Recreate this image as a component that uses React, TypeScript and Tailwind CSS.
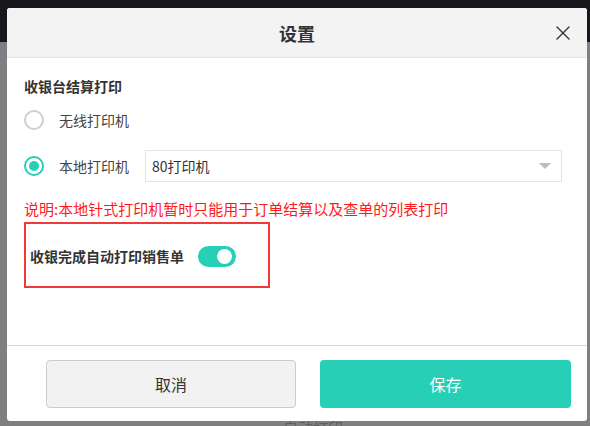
import { X } from 'lucide-react';

export default function App() {
  return (
    <div
      className="relative w-[590px] h-[426px] overflow-hidden bg-[#7f7f7f]"
      style={{ fontFamily: '"Noto Sans CJK SC", "Noto Sans", sans-serif' }}
    >
      {/* page behind the overlay */}
      <div className="h-[42px] bg-[#17181c]" />
      <div className="h-[16px] bg-[#7c8086]" />
      <div className="absolute left-[283px] top-[418px] text-[15px] leading-[20px] text-[#5f5f5f]">自动打印</div>

      {/* dialog */}
      <div className="absolute left-[7px] top-[8px] w-[580px] h-[413px] bg-white rounded-[3px] flex flex-col overflow-hidden">
        {/* header */}
        <div className="h-[50px] bg-[#f3f3f3] border-b border-[#e4e4e4] flex items-center justify-center relative">
          <span className="text-[18px] font-bold text-[#333] leading-none">设置</span>
          <button className="absolute right-[12px] top-[13px] text-[#333]">
            <X className="w-[24px] h-[24px]" strokeWidth={1.4} />
          </button>
        </div>

        {/* body */}
        <div className="flex-1 pl-[17px] pr-[25px] pt-[18px]">
          <div className="text-[14px] font-bold text-[#333] leading-[20px]">收银台结算打印</div>

          <div className="mt-[8px] h-[32px] flex items-center">
            <span className="w-[20px] h-[20px] rounded-full border-2 border-[#cfcfcf] bg-white" />
            <span className="ml-[15px] text-[14px] text-[#444]">无线打印机</span>
          </div>

          <div className="mt-[14px] h-[32px] flex items-center">
            <span className="w-[20px] h-[20px] rounded-full border-2 border-[#26cfb5] flex items-center justify-center">
              <span className="w-[10px] h-[10px] rounded-full bg-[#26cfb5]" />
            </span>
            <span className="ml-[15px] text-[14px] text-[#444] w-[70px]">本地打印机</span>
            <div className="ml-[16px] flex-1 h-[32px] border border-[#e4e4e4] flex items-center justify-between pl-[6px] pr-[10px]">
              <span className="text-[14px] text-[#333]">80打印机</span>
              <span className="w-0 h-0 border-l-[6px] border-r-[6px] border-t-[6px] border-l-transparent border-r-transparent border-t-[#bdbdbd]" />
            </div>
          </div>

          <div className="mt-[17px] text-[15px] text-[#ff1a1a] leading-[20px]">
            说明:本地针式打印机暂时只能用于订单结算以及查单的列表打印
          </div>

          <div className="mt-[3px] w-[246px] h-[66px] border-2 border-[#f03a3a] flex items-center pl-[4px] pt-[3px]">
            <span className="text-[14px] font-bold text-[#333]">收银完成自动打印销售单</span>
            <span className="ml-[14px] w-[38px] h-[21px] rounded-full bg-[#26cfb5] flex items-center justify-end pr-[4px]">
              <span className="w-[15px] h-[15px] rounded-full bg-white" />
            </span>
          </div>
        </div>

        {/* footer */}
        <div className="h-[76px] border-t border-[#d6d9d9] flex pl-[39px] pr-[16px] pt-[14px] gap-[24px]">
          <button className="w-[250px] h-[48px] rounded-[4px] border border-[#cccccc] bg-[#f2f2f2] text-[16px] text-[#333]">
            取消
          </button>
          <button className="w-[251px] h-[48px] rounded-[4px] bg-[#26cfb5] text-[16px] text-white">
            保存
          </button>
        </div>
      </div>
    </div>
  );
}
